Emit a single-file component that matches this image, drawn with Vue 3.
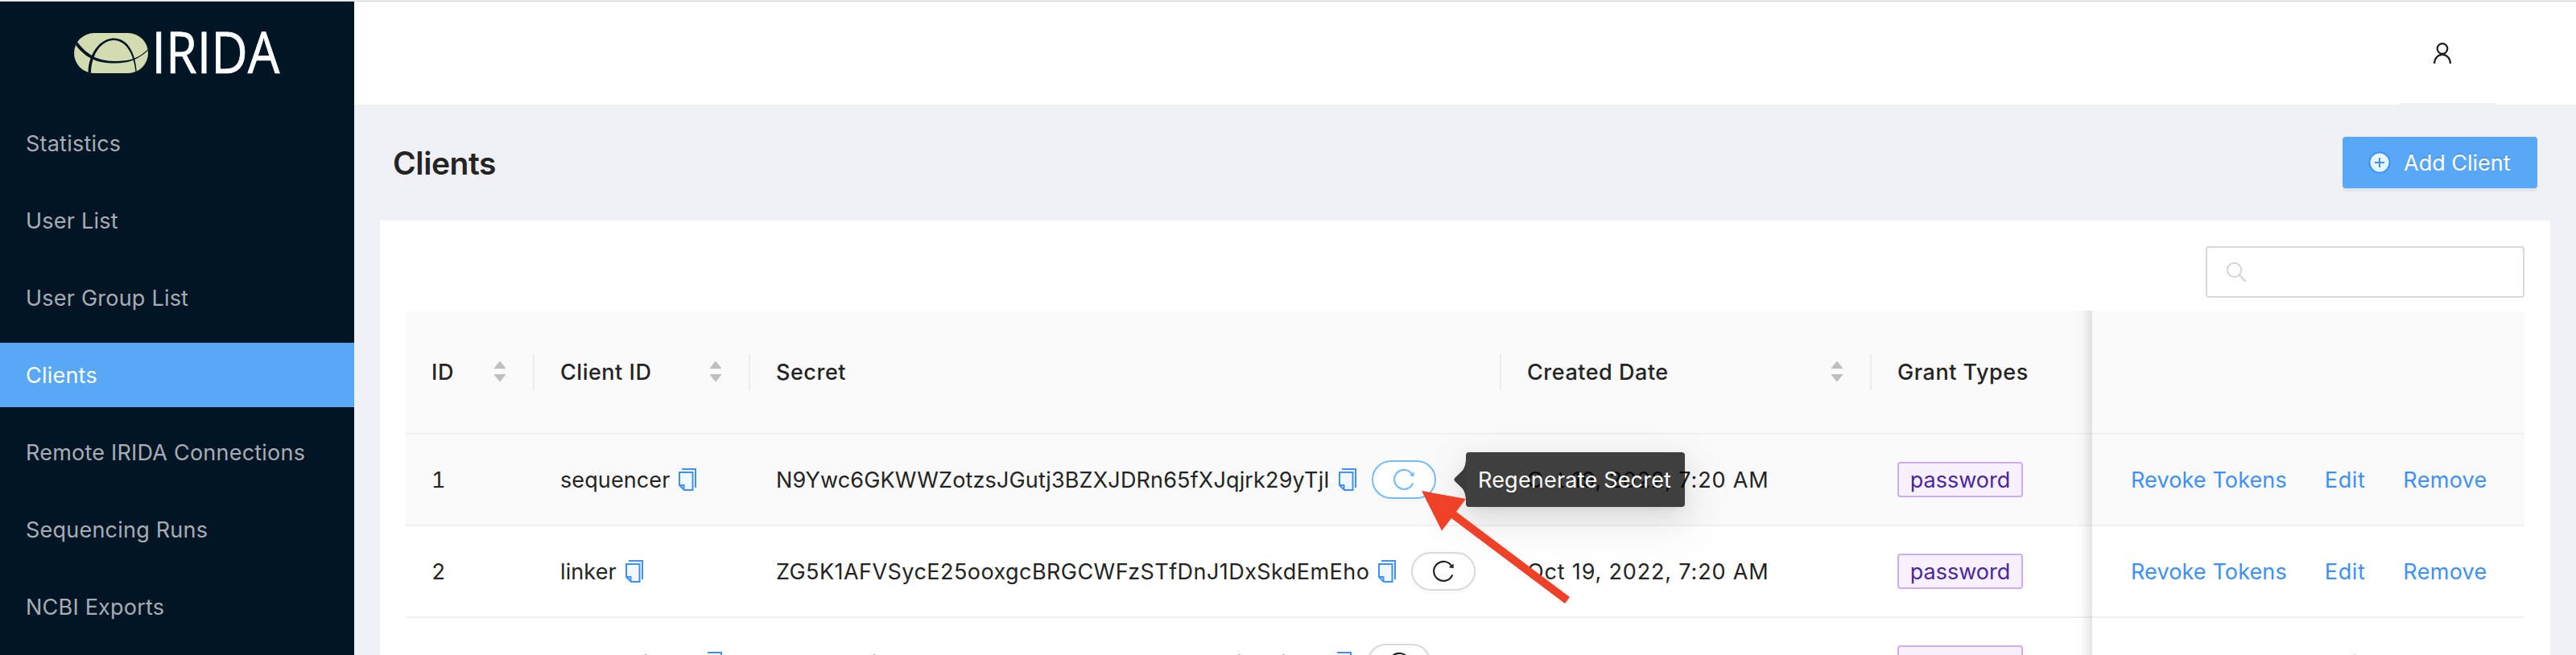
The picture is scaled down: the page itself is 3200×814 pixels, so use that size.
<script setup>
const menu = [
  'Statistics',
  'User List',
  'User Group List',
  'Clients',
  'Remote IRIDA Connections',
  'Sequencing Runs',
  'NCBI Exports',
]
const active = 'Clients'

const columns = [
  { title: 'ID', sort: true, divider: true },
  { title: 'Client ID', sort: true, divider: true },
  { title: 'Secret', sort: false, divider: true },
  { title: 'Created Date', sort: true, divider: true },
  { title: 'Grant Types', sort: false, divider: false },
]

const rows = [
  { id: 1, name: 'sequencer', secret: 'N9Ywc6GKWWZotzsJGutj3BZXJDRn65fXJqjrk29yTjI', hover: true },
  { id: 2, name: 'linker', secret: 'ZG5K1AFVSycE25ooxgcBRGCWFzSTfDnJ1DxSkdEmEho', hover: false },
  { id: 3, name: 'webextlinker', secret: 'kx9ZYVTiUC0mG7ZwoswJa8VEYvarwGrMVjZ9siT8ll', hover: false },
]
const created = 'Oct 19, 2022, 7:20 AM'
</script>

<template>
  <div class="page">
    <div class="strip"></div>
    <div class="shell">
      <aside class="sidebar">
        <svg class="logo" width="440" height="135" viewBox="0 3 440 135">
          <defs>
            <clipPath id="pill"><rect x="92" y="42" width="92" height="50" rx="25" /></clipPath>
          </defs>
          <g clip-path="url(#pill)">
            <rect x="92" y="42" width="92" height="50" fill="#d3dbb1" />
            <path d="M96 53C112 75 130 77 144 77C160 77 172 74 184 62L184 63.500C172 75 160 79.500 144 79.500C128 79.500 110 78 94 57Z" fill="#021525" />
            <path d="M109.500 92C110 63 128 48.500 141 48.500C157 48.500 168 63 170 92L168.600 92C166.500 67 156 51 141 51C127 51 113.500 67 113 92Z" fill="#021525" />
          </g>
          <text class="wordmark" x="188.500" y="92" textLength="159" lengthAdjust="spacingAndGlyphs">IRIDA</text>
        </svg>
        <nav class="menu">
          <a v-for="m in menu" :key="m" class="item" :class="{ active: m === active }">{{ m }}</a>
        </nav>
      </aside>

      <main class="main">
        <header class="topbar">
          <div class="account">
            <svg width="28" height="28" viewBox="0 0 28 28" fill="none" stroke="#1f1f1f" stroke-width="2.200">
              <circle cx="14" cy="8.500" r="6.300" />
              <path d="M4 27C4.200 20.500 8.500 15.900 14 15.900S23.800 20.500 24 27" />
            </svg>
          </div>
        </header>

        <div class="heading">
          <h1>Clients</h1>
          <button class="add">
            <svg width="28" height="28" viewBox="0 0 28 28">
              <circle cx="14" cy="14" r="12.500" fill="#e6f6ff" stroke="#3d90f8" stroke-width="2" />
              <path d="M14 8V20M8 14H20" stroke="#3d90f8" stroke-width="2" />
            </svg>
            <span class="text">Add Client</span>
          </button>
        </div>

        <section class="panel">
          <div class="search">
            <svg width="28" height="28" viewBox="0 0 28 28" fill="none" stroke="#d5d5d5" stroke-width="2">
              <circle cx="11.500" cy="11.500" r="8.700" />
              <path d="M17.500 17.500L25.500 25.700" stroke-width="2.400" />
            </svg>
          </div>

          <div class="table">
            <div class="row head">
              <div v-for="c in columns" :key="c.title" class="cell" :class="{ divided: c.divider }">
                <span class="text">{{ c.title }}</span>
                <svg v-if="c.sort" class="sorter" width="16" height="28" viewBox="0 0 16 28" fill="#bfbfbf">
                  <path d="M8 1Q8.500 1 9 1.700L15 9.300Q15.500 10.300 14.500 10.300H1.500Q.5 10.300 1 9.300L7 1.700Q7.500 1 8 1Z" />
                  <path d="M8 26.300Q8.500 26.300 9 25.600L15 18Q15.500 17 14.500 17H1.500Q.5 17 1 18L7 25.600Q7.500 26.300 8 26.300Z" />
                </svg>
              </div>
              <div class="cell fixed"></div>
            </div>

            <div v-for="r in rows" :key="r.id" class="row body" :class="{ hover: r.hover }">
              <div class="cell id"><span class="text">{{ r.id }}</span></div>
              <div class="cell name" :class="'name-' + r.id">
                <span class="text">{{ r.name }}</span>
                <svg class="copy" width="28" height="28" viewBox="0 0 28 28" fill="none" stroke="#3d90f8" stroke-width="2">
                  <path d="M7 1H24V24" />
                  <path d="M4 5H20.500V27H10L4 21Z" fill="#f0f7ff" />
                  <path d="M4 21H9.500V27" />
                </svg>
              </div>
              <div class="cell secret" :class="'secret-' + r.id">
                <span class="text">{{ r.secret }}</span>
                <svg class="copy" width="28" height="28" viewBox="0 0 28 28" fill="none" stroke="#3d90f8" stroke-width="2">
                  <path d="M7 1H24V24" />
                  <path d="M4 5H20.500V27H10L4 21Z" fill="#f0f7ff" />
                  <path d="M4 21H9.500V27" />
                </svg>
                <button class="regen">
                  <svg width="28" height="28" viewBox="0 0 28 28" fill="none" stroke="currentColor">
                    <path d="M24.500 7.800A12 12 0 1 0 25.300 18.300" stroke-width="2.200" />
                    <path d="M26.600 4.500V10.200L20.500 9Z" fill="currentColor" stroke="none" />
                  </svg>
                </button>
              </div>
              <div class="cell date"><span class="text">{{ created }}</span></div>
              <div class="cell"><span class="tag">password</span></div>
              <div class="cell fixed links">
                <a class="text revoke">Revoke Tokens</a>
                <a class="text edit">Edit</a>
                <a class="text remove">Remove</a>
              </div>
            </div>
          </div>
        </section>
      </main>
    </div>

    <div class="tooltip">
      <svg class="tip" width="16" height="48" viewBox="0 0 16 48">
        <path d="M15 0V48C14 40 12.500 37 9 33.500L1.200 26Q-.5 24 1.200 22L9 14.500C12.500 11 14 8 15 0Z" fill="#000" fill-opacity=".75" />
      </svg>
      <span>Regenerate Secret</span>
    </div>

    <svg class="pointer" width="200" height="150" viewBox="0 0 200 150">
      <path d="M6 0L61 10L49 26L190 132L184 140L43 34L31 49.500Z" fill="#ee4127" />
    </svg>
  </div>
</template>

<style>
body {
  margin: 0;
  overflow: hidden;
}
</style>

<style scoped>
.page {
  position: relative;
  width: 3200px;
  height: 814px;
  overflow: hidden;
  display: flex;
  flex-direction: column;
  background: #f0f1f5;
  color: #242424;
  font: 400 27px/44px Inter, "Liberation Sans", sans-serif;
}
.strip {
  flex: none;
  height: 1px;
  background: #f1f1f1;
  border-bottom: 1px solid #cfd0d1;
}
.shell {
  flex: 1;
  min-height: 0;
  display: flex;
}
.sidebar {
  width: 440px;
  flex: none;
  background: #021525;
}
.logo {
  display: block;
}
.wordmark {
  font: 400 71px "Open Sans", "Noto Sans", sans-serif;
  fill: #fff;
  stroke: #fff;
  stroke-width: 0.7px;
}
.menu {
  display: flex;
  flex-direction: column;
  gap: 16px;
  margin-top: 1px;
}
.item {
  height: 80px;
  padding-left: 32px;
  line-height: 82px;
  letter-spacing: 0.22px;
  color: #a6adb4;
}
.item.active {
  background: #59a8f8;
  color: #fff;
}
.text {
  padding-top: 2px;
}
.main {
  flex: 1;
  min-width: 0;
  display: flex;
  flex-direction: column;
}
.topbar {
  flex: none;
  height: 128px;
  display: flex;
  justify-content: flex-end;
  padding-right: 100px;
  background: #fff;
}
.account {
  box-sizing: border-box;
  width: 120px;
  height: 128px;
  padding: 50px 0 0 40px;
  border-bottom: 2px solid #f0f1f2;
}
.account svg {
  display: block;
}
.heading {
  flex: none;
  height: 144px;
  display: flex;
  align-items: center;
  justify-content: space-between;
  padding: 0 48px;
}
h1 {
  margin: 2px 0 0;
  font-size: 39px;
  font-weight: 600;
  line-height: 64px;
  letter-spacing: -0.4px;
}
.add {
  box-sizing: border-box;
  width: 242px;
  height: 64px;
  display: flex;
  align-items: center;
  gap: 16px;
  padding: 0 0 0 32px;
  border: 0;
  border-radius: 4px;
  background: #59a8f8;
  box-shadow: 0 4px 0 rgba(0, 0, 0, 0.043);
  color: #fff;
  font: inherit;
  text-shadow: 0 -2px 0 rgba(0, 0, 0, 0.12);
}
.panel {
  flex: 1;
  min-height: 0;
  margin: 0 32px;
  padding: 32px 32px 0;
  background: #fff;
  display: flex;
  flex-direction: column;
}
.search {
  box-sizing: border-box;
  flex: none;
  align-self: flex-end;
  width: 396px;
  height: 64px;
  padding: 16px 22px;
  border: 2px solid #d9d9d9;
  border-radius: 4px;
}
.search svg {
  display: block;
}
.table {
  flex: none;
  margin-top: 16px;
  border-radius: 4px 4px 0 0;
}
.row {
  display: grid;
  grid-template-columns: 160px 268px 933px 460px 274px 537px;
  height: 114px;
  background: #fff;
}
.row.head {
  height: 154px;
  border-radius: 4px 4px 0 0;
  background: #fafafa;
  font-weight: 500;
  letter-spacing: 0.52px;
}
.row.hover {
  background: #fafafa;
}
.cell {
  position: relative;
  box-sizing: border-box;
  display: flex;
  align-items: center;
  padding-left: 32px;
  border-bottom: 2px solid #f0f0f0;
  white-space: nowrap;
}
.head .cell {
  justify-content: space-between;
  padding-right: 35px;
}
.divided::before {
  content: "";
  position: absolute;
  right: 0;
  top: 54px;
  width: 2px;
  height: 45px;
  background: #ececec;
}
.sorter {
  display: block;
  width: 16px;
}
.id {
  font-variant-numeric: tabular-nums;
}
.name {
  letter-spacing: 0.1px;
}
.name-3 {
  letter-spacing: 0.45px;
}
.copy {
  flex: none;
  margin-left: 8px;
}
.secret-1,
.secret-3 {
  letter-spacing: 0.16px;
}
.secret-2 {
  letter-spacing: 0.45px;
}
.regen {
  box-sizing: border-box;
  width: 80px;
  height: 48px;
  margin-left: 16px;
  padding: 0;
  display: flex;
  align-items: center;
  justify-content: center;
  border: 2px solid #d9d9d9;
  border-radius: 24px;
  background: #fff;
  box-shadow: 0 4px 0 rgba(0, 0, 0, 0.015);
  color: #242424;
}
.hover .regen {
  border-color: #78bbfa;
  color: #78bbfa;
}
.date {
  letter-spacing: 0.83px;
}
.tag {
  box-sizing: border-box;
  width: 156px;
  height: 44px;
  border: 2px solid #cdadf0;
  border-radius: 4px;
  background: #f7f0fe;
  color: #4c26a0;
  line-height: 42px;
  text-align: center;
}
.fixed {
  padding-left: 48px;
}
.fixed::before {
  content: "";
  position: absolute;
  top: 0;
  bottom: -2px;
  left: -60px;
  width: 60px;
  box-shadow: inset -20px 0 16px -16px rgba(0, 0, 0, 0.15);
}
.links a {
  color: #3d90f8;
}
.links .revoke {
  letter-spacing: 0.12px;
}
.links .edit {
  margin-left: 47px;
  letter-spacing: 0.6px;
}
.links .remove {
  margin-left: 47px;
  letter-spacing: 0.3px;
}
.tooltip {
  position: absolute;
  left: 1821px;
  top: 562px;
  width: 272px;
  height: 68px;
  border-radius: 4px;
  background: rgba(0, 0, 0, 0.75);
  box-shadow:
    0 6px 12px -8px rgba(0, 0, 0, 0.12),
    0 12px 32px rgba(0, 0, 0, 0.08),
    0 18px 56px 16px rgba(0, 0, 0, 0.05);
  color: #fff;
  line-height: 70px;
  text-indent: 15px;
  letter-spacing: 0.2px;
}
.tip {
  position: absolute;
  left: -15px;
  top: 10px;
}
.pointer {
  position: absolute;
  left: 1760px;
  top: 610px;
}
</style>
